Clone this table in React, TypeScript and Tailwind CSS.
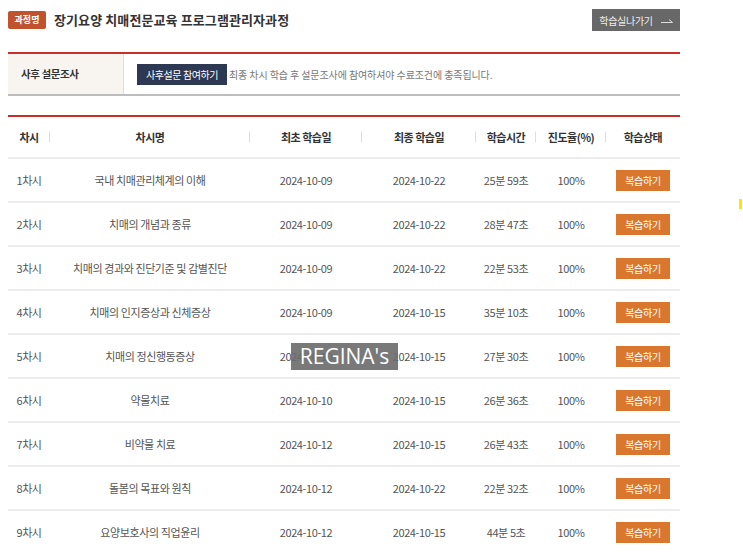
import React from "react"

const font = { fontFamily: '"Noto Sans CJK KR", "Noto Sans", sans-serif' }

const rows = [
  ["1차시", "국내 치매관리체계의 이해", "2024-10-09", "2024-10-22", "25분 59초"],
  ["2차시", "치매의 개념과 종류", "2024-10-09", "2024-10-22", "28분 47초"],
  ["3차시", "치매의 경과와 진단기준 및 감별진단", "2024-10-09", "2024-10-22", "22분 53초"],
  ["4차시", "치매의 인지증상과 신체증상", "2024-10-09", "2024-10-15", "35분 10초"],
  ["5차시", "치매의 정신행동증상", "2024-10-10", "2024-10-15", "27분 30초"],
  ["6차시", "약물치료", "2024-10-10", "2024-10-15", "26분 36초"],
  ["7차시", "비약물 치료", "2024-10-12", "2024-10-15", "26분 43초"],
  ["8차시", "돌봄의 목표와 원칙", "2024-10-12", "2024-10-22", "22분 32초"],
  ["9차시", "요양보호사의 직업윤리", "2024-10-12", "2024-10-15", "44분 5초"],
]

const headers = ["차시", "차시명", "최초 학습일", "최종 학습일", "학습시간", "진도율(%)", "학습상태"]

const cols = "grid grid-cols-[42px_200px_112px_114px_60px_70px_74px]"

export default function App() {
  return (
    <div className="relative w-[743px] bg-white px-2 pt-[9px]" style={font}>
      <div className="w-[672px]">
        {/* title */}
        <div className="flex h-[22px] items-center justify-between">
          <div className="flex items-center gap-2">
            <span className="flex h-[18px] w-[38px] items-center justify-center rounded-[2px] bg-[#c0532e] text-[9px] font-bold text-white">
              과정명
            </span>
            <h1 className="text-[13px] font-bold tracking-[0.1px] text-[#333]">
              장기요양 치매전문교육 프로그램관리자과정
            </h1>
          </div>
          <button className="flex h-[22px] w-[88px] items-center justify-center gap-2 bg-[#686868] text-[10px] tracking-[-0.3px] text-[#eee]">
            학습실나가기
            <svg width="12" height="8" viewBox="0 0 12 8" fill="none" stroke="#ddd" strokeWidth="1">
              <path d="M0 6.5h11.5M11.5 6.5L8 3.5" />
            </svg>
          </button>
        </div>

        {/* survey */}
        <div className="mt-[21px] flex h-[44px] border-t-2 border-b-2 border-t-[#c9302c] border-b-[#bdbdbd]">
          <div className="flex w-[116px] items-center border-r border-[#e2ddd6] bg-[#f8f5f1] pl-[13px] text-[10.5px] font-bold tracking-[-0.4px] text-[#333]">
            사후 설문조사
          </div>
          <div className="flex items-center pl-[13px]">
            <button className="h-[21px] w-[90px] bg-[#2d3852] text-[10px] tracking-[-0.4px] text-white">
              사후설문 참여하기
            </button>
            <span className="ml-[2px] text-[10px] tracking-[-0.1px] text-[#777]">
              최종 차시 학습 후 설문조사에 참여하셔야 수료조건에 충족됩니다.
            </span>
          </div>
        </div>

        {/* table */}
        <div className="mt-[19px] border-t-2 border-[#c9302c]">
          <div className={`${cols} h-[42px] items-center border-b-2 border-[#ececec]`}>
            {headers.map((h, i) => (
              <div key={h} className="relative flex justify-center text-[11px] font-bold tracking-[-0.5px] text-[#333]">
                {h}
                {i < headers.length - 1 && (
                  <span className="absolute right-0 top-1/2 h-[11px] w-px -translate-y-1/2 bg-[#e0e0e0]" />
                )}
              </div>
            ))}
          </div>
          {rows.map((r) => (
            <div key={r[0]} className={`${cols} h-[44px] items-center border-b-2 border-[#ececec] text-[11px] tracking-[-0.4px] text-[#555]`}>
              <div className="text-center">{r[0]}</div>
              <div className="text-center">{r[1]}</div>
              <div className="text-center">{r[2]}</div>
              <div className="text-center">{r[3]}</div>
              <div className="text-center">{r[4]}</div>
              <div className="text-center">100%</div>
              <div className="flex justify-center">
                <button className="h-[21px] w-[54px] bg-[#d9772f] text-[10px] tracking-[-0.3px] text-white">
                  복습하기
                </button>
              </div>
            </div>
          ))}
        </div>
      </div>

      {/* watermark */}
      <div className="absolute left-[291px] top-[343px] flex h-[27px] w-[107px] items-center justify-center bg-[#6a6a6a]/90 text-[21px] leading-none text-white" style={{ fontFamily: '"Open Sans", sans-serif' }}>
        REGINA's
      </div>
      <div className="absolute left-[739px] top-[199px] h-[10px] w-[3px] bg-[#ffe600]" />
    </div>
  )
}
